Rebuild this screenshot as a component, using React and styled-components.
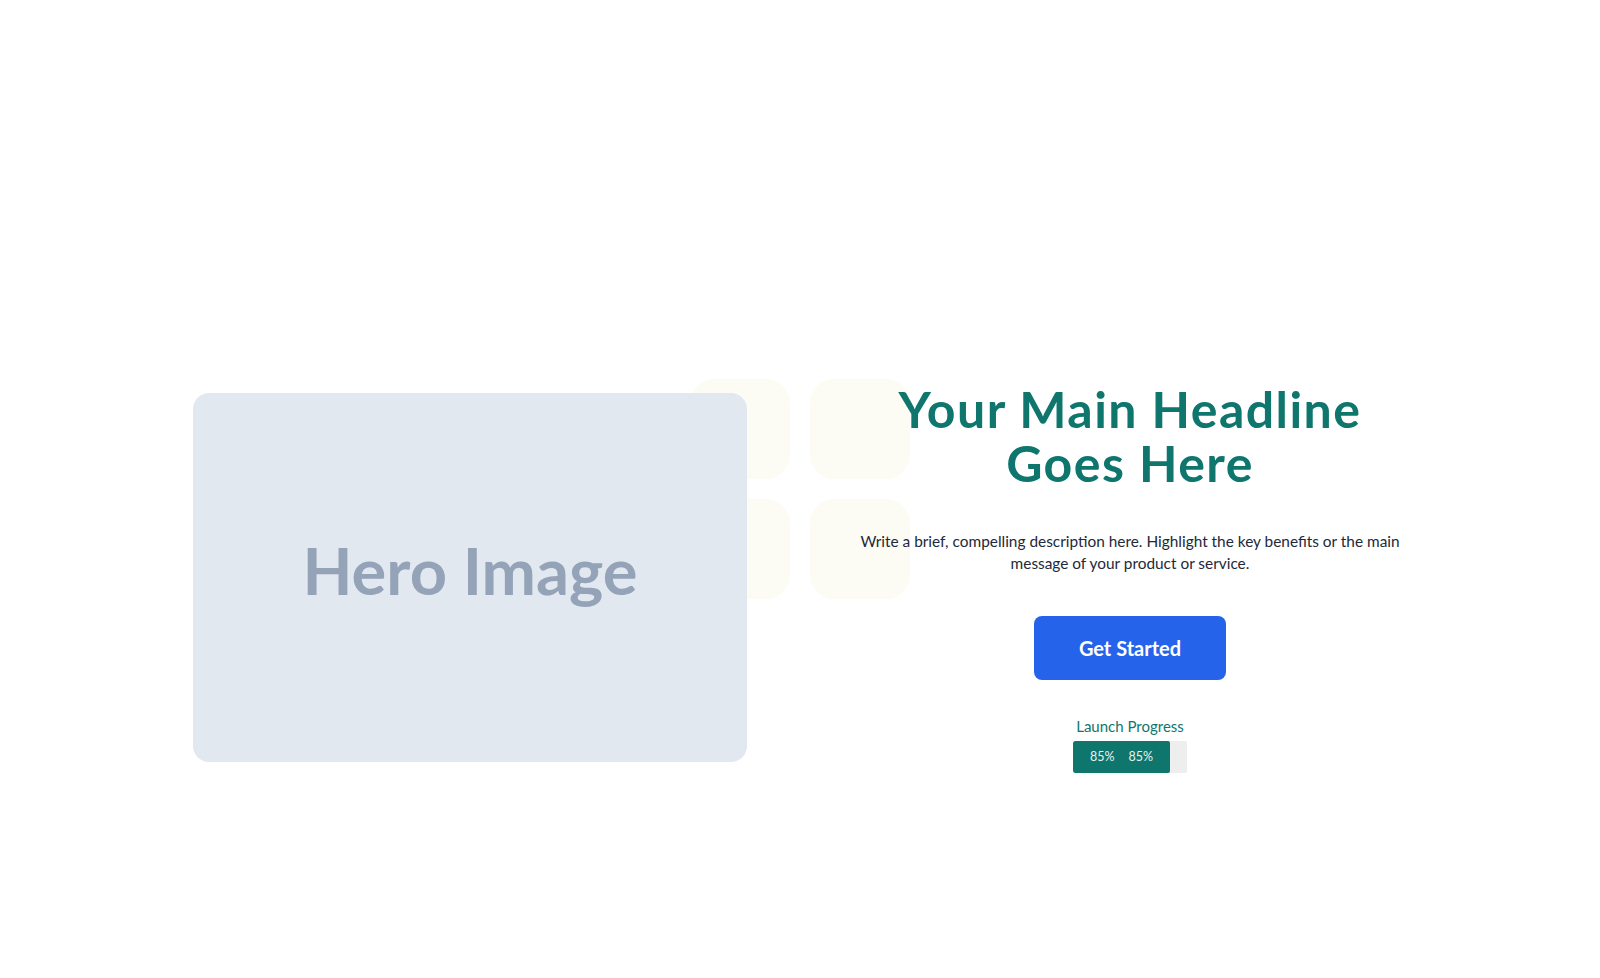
import React from "react";
import styled, { createGlobalStyle } from "styled-components";

const Global = createGlobalStyle`
  html, body { margin: 0; padding: 0; background: #ffffff; }
  body { font-family: "Lato", "Noto Sans", sans-serif; }
  * { box-sizing: border-box; }
`;

const Section = styled.section`
  position: relative;
  height: 978px;
  padding-top: 176px;
  display: flex;
  align-items: center;
  overflow: hidden;
`;

const Decor = styled.div`
  position: absolute;
  top: 50%;
  left: 50%;
  transform: translate(-50%, -50%);
  display: grid;
  grid-template-columns: repeat(2, 100px);
  grid-auto-rows: 100px;
  gap: 20px;
  z-index: 0;
`;

const Tile = styled.div`
  background: #fdfcf4;
  border-radius: 24px;
`;

const Container = styled.div`
  position: relative;
  z-index: 1;
  width: 100%;
  display: grid;
  grid-template-columns: 554px 554px;
  column-gap: 106px;
  justify-content: center;
  align-items: center;
`;

const HeroImage = styled.div`
  width: 554px;
  height: 369px;
  padding-bottom: 14px;
  background: #e2e8f0;
  border-radius: 16px;
  display: flex;
  align-items: center;
  justify-content: center;
  color: #94a3b8;
  font-family: "Lato", sans-serif;
  font-weight: 700;
  font-size: 65px;
`;

const Content = styled.div`
  display: flex;
  flex-direction: column;
  align-items: center;
  text-align: center;
`;

const Headline = styled.h1`
  margin: 0;
  font-family: "Lato", sans-serif;
  font-weight: 700;
  font-size: 50px;
  line-height: 54px;
  letter-spacing: 1.45px;
  color: #0f766e;
`;

const Description = styled.p`
  margin: 40px 0 0;
  font-family: "Lato", sans-serif;
  font-size: 15.4px;
  line-height: 22.5px;
  color: #1e293b;
  max-width: 554px;
`;

const Button = styled.button`
  margin-top: 41px;
  width: 192px;
  height: 64px;
  border: none;
  border-radius: 8px;
  background: #2563eb;
  color: #ffffff;
  font-family: "Lato", sans-serif;
  font-weight: 700;
  font-size: 20px;
  cursor: pointer;
`;

const ProgressLabel = styled.div`
  margin-top: 36px;
  font-family: "Lato", sans-serif;
  font-size: 15px;
  color: #0f766e;
  line-height: 20px;
`;

const Track = styled.div`
  margin-top: 5px;
  width: 114px;
  height: 32px;
  background: #eeeeee;
  border-radius: 2px;
  overflow: hidden;
`;

const Fill = styled.div`
  height: 100%;
  background: #0f766e;
  border-radius: 2px;
  display: flex;
  align-items: center;
  justify-content: center;
  gap: 14px;
  color: #e6f4f1;
  font-family: "Lato", sans-serif;
  font-size: 12.5px;
`;

export default function App() {
  const progress = 85;
  return (
    <>
      <Global />
      <Section>
        <Decor aria-hidden>
          <Tile />
          <Tile />
          <Tile />
          <Tile />
        </Decor>
        <Container>
          <HeroImage>Hero Image</HeroImage>
          <Content>
            <Headline>
              Your Main Headline
              <br />
              Goes Here
            </Headline>
            <Description>
              Write a brief, compelling description here. Highlight the key benefits or the main
              message of your product or service.
            </Description>
            <Button>Get Started</Button>
            <ProgressLabel>Launch Progress</ProgressLabel>
            <Track>
              <Fill style={{ width: `${progress}%` }}>
                <span>{progress}%</span>
                <span>{progress}%</span>
              </Fill>
            </Track>
          </Content>
        </Container>
      </Section>
    </>
  );
}
